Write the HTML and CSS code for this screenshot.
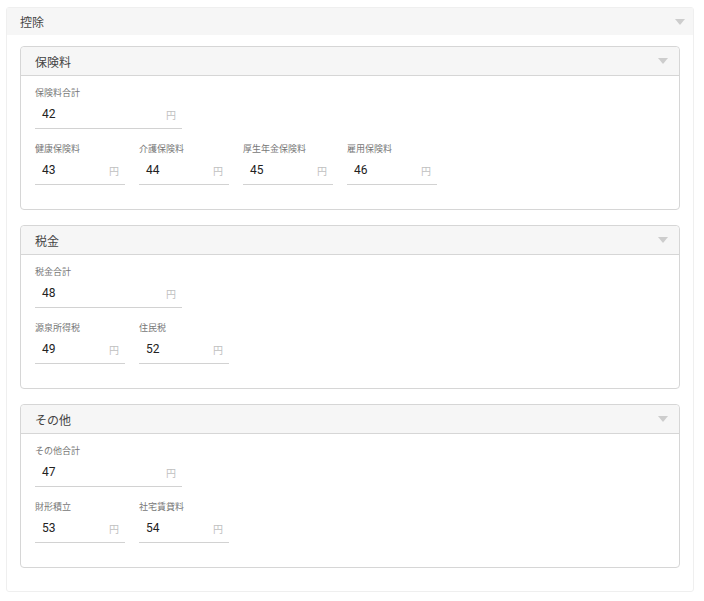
FILE: index.html
```html
<!DOCTYPE html>
<html lang="ja">
  <head>
    <meta charset="UTF-8" />
    <meta name="viewport" content="width=device-width, initial-scale=1.0" />
    <title>控除</title>
    <link rel="stylesheet" href="styles.css">
  </head>
  <body>
    <section class="panel">
      <div class="panel-head">控除<span class="caret"></span></div>

      <div class="panel-body">
        <!-- 保険料 -->
        <div class="group">
          <div class="group-head">保険料<span class="caret"></span></div>
          <div class="group-body">
            <div class="row">
              <div class="field wide">
                <label>保険料合計</label>
                <div class="input"><span class="value">42</span><span class="unit">円</span></div>
              </div>
            </div>
            <div class="row">
              <div class="field">
                <label>健康保険料</label>
                <div class="input"><span class="value">43</span><span class="unit">円</span></div>
              </div>
              <div class="field">
                <label>介護保険料</label>
                <div class="input"><span class="value">44</span><span class="unit">円</span></div>
              </div>
              <div class="field">
                <label>厚生年金保険料</label>
                <div class="input"><span class="value">45</span><span class="unit">円</span></div>
              </div>
              <div class="field">
                <label>雇用保険料</label>
                <div class="input"><span class="value">46</span><span class="unit">円</span></div>
              </div>
            </div>
          </div>
        </div>

        <!-- 税金 -->
        <div class="group">
          <div class="group-head">税金<span class="caret"></span></div>
          <div class="group-body">
            <div class="row">
              <div class="field wide">
                <label>税金合計</label>
                <div class="input"><span class="value">48</span><span class="unit">円</span></div>
              </div>
            </div>
            <div class="row">
              <div class="field">
                <label>源泉所得税</label>
                <div class="input"><span class="value">49</span><span class="unit">円</span></div>
              </div>
              <div class="field">
                <label>住民税</label>
                <div class="input"><span class="value">52</span><span class="unit">円</span></div>
              </div>
            </div>
          </div>
        </div>

        <!-- その他 -->
        <div class="group">
          <div class="group-head">その他<span class="caret"></span></div>
          <div class="group-body">
            <div class="row">
              <div class="field wide">
                <label>その他合計</label>
                <div class="input"><span class="value">47</span><span class="unit">円</span></div>
              </div>
            </div>
            <div class="row">
              <div class="field">
                <label>財形積立</label>
                <div class="input"><span class="value">53</span><span class="unit">円</span></div>
              </div>
              <div class="field">
                <label>社宅賃貸料</label>
                <div class="input"><span class="value">54</span><span class="unit">円</span></div>
              </div>
            </div>
          </div>
        </div>
      </div>
    </section>
  </body>
</html>
```

FILE: styles.css
```css
* {
  box-sizing: border-box;
}

body,
html {
  margin: 0;
  padding: 0;
  font-family: Roboto, "Noto Sans CJK JP", sans-serif;
  background-color: #fff;
  color: #333;
}

.panel {
  margin: 7px 10px 0 6px;
  border: 1px solid #efefef;
  border-radius: 3px;
  background-color: #fff;
}

.panel-head {
  display: flex;
  align-items: center;
  justify-content: space-between;
  height: 27px;
  padding: 0 8px 0 13px;
  background-color: #f6f6f6;
  font-size: 12px;
  color: #444;
}

.panel-body {
  display: flex;
  flex-direction: column;
  gap: 15px;
  padding: 11px 13px 23px 13px;
}

.caret {
  width: 0;
  height: 0;
  border-top: 6px solid #cdcdcd;
  border-left: 5px solid transparent;
  border-right: 5px solid transparent;
}

.group {
  border: 1px solid #d6d6d6;
  border-radius: 4px;
}

.group-head {
  display: flex;
  align-items: center;
  justify-content: space-between;
  height: 29px;
  padding: 0 11px 0 14px;
  background-color: #f6f6f6;
  border-bottom: 1px solid #d6d6d6;
  border-radius: 4px 4px 0 0;
  font-size: 12px;
  color: #444;
}

.group-body {
  display: flex;
  flex-direction: column;
  gap: 14px;
  padding: 11px 14px 24px 14px;
}

.row {
  display: flex;
  gap: 14px;
}

.field {
  display: flex;
  flex-direction: column;
  gap: 2px;
  width: 90px;
}

.field.wide {
  width: 147px;
}

.field label {
  font-size: 9px;
  line-height: 12px;
  color: #777;
}

.input {
  display: flex;
  align-items: center;
  justify-content: space-between;
  height: 28px;
  padding: 0 6px 1px 7px;
  border-bottom: 1px solid #d2d2d2;
}

.value {
  font-size: 12px;
  color: #222;
}

.unit {
  font-size: 10px;
  color: #c0c0c0;
}
```
